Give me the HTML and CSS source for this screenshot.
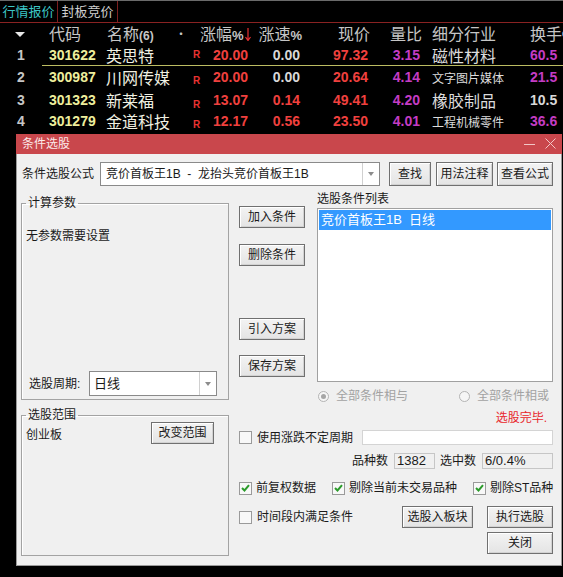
FILE: index.html
```html
<!DOCTYPE html>
<html lang="zh-CN">
<head>
<meta charset="utf-8">
<title>条件选股</title>
<link rel="stylesheet" href="styles.css">
</head>
<body>
<div class="screen">
  <div class="tabs">
    <div class="tab tab-a">行情报价</div>
    <div class="tab tab-b">封板竞价</div>
  </div>
  <div class="quote">
    <div class="qrow head">
      <div class="c idx"><span class="sort"></span></div>
      <div class="c hcode">代码</div>
      <div class="c hname">名称<b>(6)</b></div>
      <div class="c hdot">•</div>
      <div class="c hnum">涨幅<b>%</b><svg class="darr" width="6" height="13" viewBox="0 0 6 13"><path d="M3 0V12M0.5 9L3 12.5L5.5 9" fill="none" stroke="#e83030" stroke-width="1.2"/></svg></div>
      <div class="c hnum">涨速<b>%</b></div>
      <div class="c hnum">现价</div>
      <div class="c hnum">量比</div>
      <div class="c hind">细分行业</div>
      <div class="c hhs">换手<b>%</b></div>
    </div>
    <div class="qrow sel">
      <div class="c idx">1</div>
      <div class="c code">301622</div>
      <div class="c name">英思特</div>
      <div class="c rr">R</div>
      <div class="c num red">20.00</div>
      <div class="c num wht">0.00</div>
      <div class="c num red">97.32</div>
      <div class="c num pur">3.15</div>
      <div class="c ind">磁性材料</div>
      <div class="c hs pur">60.5</div>
    </div>
    <div class="qrow">
      <div class="c idx">2</div>
      <div class="c code">300987</div>
      <div class="c name">川网传媒</div>
      <div class="c rr">R</div>
      <div class="c num red">20.00</div>
      <div class="c num wht">0.00</div>
      <div class="c num red">20.64</div>
      <div class="c num pur">4.14</div>
      <div class="c ind small">文字图片媒体</div>
      <div class="c hs pur">21.5</div>
    </div>
    <div class="qrow">
      <div class="c idx">3</div>
      <div class="c code">301323</div>
      <div class="c name">新莱福</div>
      <div class="c rr">R</div>
      <div class="c num red">13.07</div>
      <div class="c num red">0.14</div>
      <div class="c num red">49.41</div>
      <div class="c num pur">4.20</div>
      <div class="c ind">橡胶制品</div>
      <div class="c hs wht">10.5</div>
    </div>
    <div class="qrow">
      <div class="c idx">4</div>
      <div class="c code">301279</div>
      <div class="c name">金道科技</div>
      <div class="c rr">R</div>
      <div class="c num red">12.17</div>
      <div class="c num red">0.56</div>
      <div class="c num red">23.50</div>
      <div class="c num pur">4.01</div>
      <div class="c ind small">工程机械零件</div>
      <div class="c hs pur">36.6</div>
    </div>
  </div>

  <div class="dialog">
    <div class="titlebar">
      <span class="ttl">条件选股</span>
      <span class="wctl">
        <svg width="11" height="11" viewBox="0 0 11 11"><path d="M0 6.5H11" stroke="#f2c6c6" stroke-width="1"/></svg>
        <svg width="11" height="11" viewBox="0 0 11 11"><path d="M0.5 0.5L10.5 10.5M10.5 0.5L0.5 10.5" stroke="#f2c6c6" stroke-width="1"/></svg>
      </span>
    </div>
    <div class="dbody">
      <div class="frow">
        <span class="flabel">条件选股公式</span>
        <div class="combo cwide"><span class="ctext">竞价首板王1B&nbsp;&nbsp;-&nbsp;&nbsp;龙抬头竞价首板王1B</span><span class="carrow"><i></i></span></div>
        <button class="btn b-find">查找</button>
        <button class="btn b-use">用法注释</button>
        <button class="btn b-view">查看公式</button>
      </div>
      <div class="main">
        <div class="lcol">
          <fieldset class="grp g1">
            <legend>计算参数</legend>
            <div class="g1in">
              <div class="note">无参数需要设置</div>
              <div class="period">
                <span class="plabel">选股周期:</span>
                <div class="combo csmall"><span class="ctext">日线</span><span class="carrow"><i></i></span></div>
              </div>
            </div>
          </fieldset>
          <fieldset class="grp g2">
            <legend>选股范围</legend>
            <div class="g2in">
              <span class="scope">创业板</span>
              <button class="btn b-scope">改变范围</button>
            </div>
          </fieldset>
        </div>
        <div class="rcol">
          <div class="rtop">
            <div class="bcol">
              <button class="btn b-col">加入条件</button>
              <button class="btn b-col b-del">删除条件</button>
              <button class="btn b-col b-imp">引入方案</button>
              <button class="btn b-col b-save">保存方案</button>
            </div>
            <div class="lstcol">
              <div class="lstlabel">选股条件列表</div>
              <div class="listbox"><div class="item">竞价首板王1B&nbsp;&nbsp;日线</div></div>
              <div class="radios">
                <span class="radio r1"><span class="rc on"></span>全部条件相与</span>
                <span class="radio r2"><span class="rc"></span>全部条件相或</span>
              </div>
            </div>
          </div>
          <div class="done">选股完毕.</div>
          <div class="crow1">
            <span class="cb"></span><span class="cbt">使用涨跌不定周期</span>
            <span class="tbox"></span>
          </div>
          <div class="stats">
            <span>品种数</span><span class="sbox s1">1382</span>
            <span class="lbl2">选中数</span><span class="sbox s2">6/0.4%</span>
          </div>
          <div class="crow2">
            <span class="ck"><span class="cb on"><svg width="9" height="8" viewBox="0 0 9 8"><path d="M1 4L3.5 6.5L8 1.2" fill="none" stroke="#2b9b2b" stroke-width="2"/></svg></span><span class="cbt">前复权数据</span></span>
            <span class="ck"><span class="cb on"><svg width="9" height="8" viewBox="0 0 9 8"><path d="M1 4L3.5 6.5L8 1.2" fill="none" stroke="#2b9b2b" stroke-width="2"/></svg></span><span class="cbt">剔除当前未交易品种</span></span>
            <span class="ck"><span class="cb on"><svg width="9" height="8" viewBox="0 0 9 8"><path d="M1 4L3.5 6.5L8 1.2" fill="none" stroke="#2b9b2b" stroke-width="2"/></svg></span><span class="cbt">剔除ST品种</span></span>
          </div>
          <div class="crow3">
            <span class="cb"></span><span class="cbt">时间段内满足条件</span>
            <button class="btn b-board">选股入板块</button>
            <button class="btn b-run">执行选股</button>
          </div>
          <div class="crow4">
            <button class="btn b-close">关闭</button>
          </div>
        </div>
      </div>
    </div>
  </div>
</div>
</body>
</html>
```

FILE: styles.css
```css
* { box-sizing: border-box; }
html, body { margin: 0; padding: 0; background: #000; }

.screen {
  width: 563px;
  height: 577px;
  position: relative;
  overflow: hidden;
  background: #000;
  font-family: "Noto Sans CJK SC", sans-serif;
}

/* ---------- tabs ---------- */
.tabs {
  display: flex;
  height: 23px;
  border-top: 1px solid #6a6a6a;
  border-bottom: 1px solid #8a2222;
}
.tab {
  font-size: 13px;
  line-height: 20px;
  text-align: center;
  color: #cfcfcf;
  border-right: 1px solid #7c1f1f;
}
.tab-a { width: 58px; color: #3cc6c6; }
.tab-b { width: 60px; }

/* ---------- quote table ---------- */
.qrow {
  display: grid;
  grid-template-columns: 42px 62px 71px 25px 50px 52px 68px 52px 106px 1fr;
  height: 22px;
  align-items: center;
  white-space: nowrap;
}
.qrow.head { height: 21px; color: #c6c6c6; font-size: 16px; line-height: 21px; }
.c { overflow: visible; }
.idx {
  padding-left: 17px;
  font: bold 14px "Liberation Sans", sans-serif;
  color: #c6c6c6;
}
.sort {
  display: inline-block;
  margin-left: -2px;
  border-left: 5px solid transparent;
  border-right: 5px solid transparent;
  border-top: 5px solid #e6e6e6;
  vertical-align: middle;
}
.hcode { padding-left: 7px; }
.hname { padding-left: 3px; }
.hname b, .hnum b, .hhs b { font: bold 13px "Liberation Sans", sans-serif; }
.hname b { font-size: 12px; }
.hdot { padding-left: 0; font-size: 12px; }
.hnum { text-align: right; }
.darr { vertical-align: -1px; margin-left: 1px; }
.hind { padding-left: 10px; }
.hhs { padding-left: 2px; }

.sel .c:not(:first-child) { border-bottom: 1px solid #bcbc62; height: 22px; line-height: 22px; }

.code {
  padding-left: 7px;
  font: bold 14px "Liberation Sans", sans-serif;
  color: #eeee9c;
}
.name { padding-left: 2px; font-size: 16px; color: #f0f0e2; line-height: 22px; }
.rr {
  padding-left: 18px;
  font: bold 10px "Liberation Sans", sans-serif;
  color: #e83232;
  align-self: end;
  padding-bottom: 2px;
}
.sel .rr { padding-bottom: 2px; line-height: 18px; }
.num {
  text-align: right;
  padding-right: 2px;
  font: bold 14px "Liberation Sans", sans-serif;
}
.red { color: #f0403e; }
.wht { color: #d8d8d8; }
.pur { color: #c43cc4; }
.ind { padding-left: 10px; font-size: 16px; color: #dcdcdc; }
.ind.small { font-size: 12px; }
.hs { padding-left: 2px; font: bold 14px "Liberation Sans", sans-serif; }

/* ---------- dialog ---------- */
.dialog {
  position: absolute;
  left: 16px;
  top: 134px;
  width: 546px;
  height: 432px;
  background: #f0f0f0;
  border: 1px solid #9a9a9a;
  border-top: 0;
  font-family: "Liberation Sans", "Noto Sans CJK SC", sans-serif;
  font-size: 12px;
  color: #1a1a1a;
}
.titlebar {
  height: 20px;
  margin: 0 -1px;
  background: #c9474c;
  display: flex;
  align-items: center;
  justify-content: space-between;
  padding: 0 6px 0 6px;
}
.ttl { color: #fbeaea; font-size: 12px; line-height: 20px; }
.wctl { display: flex; gap: 10px; padding-bottom: 1px; }

.dbody { padding-top: 8px; }

.btn {
  font-family: "Liberation Sans", "Noto Sans CJK SC", sans-serif;
  font-size: 12px;
  color: #1a1a1a;
  background: linear-gradient(#f3f3f3, #e4e4e4);
  border: 1px solid #707070;
  box-shadow: inset 1px 1px 0 #ffffff, inset -1px -1px 0 #d2d2d2;
  padding: 0;
  height: 22px;
  line-height: 18px;
  display: flex;
  align-items: center;
  justify-content: center;
}

.frow { display: flex; align-items: center; height: 24px; padding-left: 5px; }
.flabel { width: 78px; line-height: 14px; }
.combo {
  display: flex;
  height: 24px;
  background: #fff;
  border: 1px solid #8a8a8a;
}
.cwide { width: 280px; }
.ctext { flex: 1; padding-left: 5px; line-height: 22px; white-space: nowrap; overflow: hidden; }
.cwide .ctext { font-size: 12px; }
.carrow {
  width: 17px;
  border-left: 1px solid #d0d0d0;
  display: flex;
  align-items: center;
  justify-content: center;
}
.carrow i {
  display: block;
  border-left: 3.5px solid transparent;
  border-right: 3.5px solid transparent;
  border-top: 4px solid #8c8c8c;
}
.frow .btn { height: 24px; }
.b-find { margin-left: 9px; width: 42px; }
.b-use { margin-left: 5px; width: 57px; }
.b-view { margin-left: 4px; width: 56px; }

.main { display: flex; margin-top: 6px; padding-left: 4px; }
.lcol { width: 208px; }

.grp {
  margin: 0;
  min-width: 0;
  width: 208px;
  border: 1px solid #a3a3a3;
  box-shadow: inset 1px 1px 0 #fff;
  padding: 0 4px 3px 4px;
}
.grp legend {
  font-size: 12px;
  line-height: 14px;
  padding: 0 2px;
  margin-left: 0px;
}
.g1 { margin-top: 4px; }
.g1in {
  height: 186px;
  display: flex;
  flex-direction: column;
  justify-content: space-between;
}
.note { margin-top: 19px; line-height: 14px; }
.period { display: flex; align-items: center; padding-left: 3px; }
.plabel { width: 60px; line-height: 14px; }
.csmall { width: 128px; height: 25px; }
.csmall .ctext { font-size: 13px; line-height: 23px; padding-left: 4px; }

.g2 { margin-top: 8px; }
.g2in {
  height: 130px;
  display: flex;
  justify-content: space-between;
  align-items: flex-start;
  padding-right: 10px;
}
.scope { margin-top: 6px; line-height: 14px; }
.b-scope { width: 63px; }

.rcol { width: 314px; margin-left: 10px; }
.rtop { display: flex; }
.bcol { width: 66px; padding-top: 14px; display: flex; flex-direction: column; }
.b-col { width: 66px; }
.b-del { margin-top: 16px; }
.b-imp { margin-top: 52px; }
.b-save { margin-top: 15px; }

.lstcol { width: 236px; margin-left: 12px; }
.lstlabel { line-height: 14px; }
.listbox {
  margin-top: 2px;
  height: 174px;
  background: #fff;
  border: 1px solid #a0a0a0;
  padding: 1px;
}
.item {
  background: #3399ff;
  color: #fff;
  font-size: 13px;
  line-height: 20px;
  height: 20px;
  padding-left: 2px;
  white-space: nowrap;
}
.radios { display: flex; margin-top: 7px; height: 14px; line-height: 14px; color: #a2a2a2; padding-left: 1px; }
.radio { display: flex; align-items: center; }
.r1 { width: 141px; }
.rc {
  width: 11px;
  height: 11px;
  border-radius: 50%;
  border: 1px solid #b4b4b4;
  background: #f6f6f6;
  margin-right: 7px;
  display: flex;
  align-items: center;
  justify-content: center;
}
.rc.on::after {
  content: "";
  width: 5px;
  height: 5px;
  border-radius: 50%;
  background: #a6a6a6;
}

.done { margin-top: 8px; line-height: 14px; text-align: right; padding-right: 6px; color: #e8262b; }

.cb {
  width: 13px;
  height: 13px;
  border: 1px solid #9a9a9a;
  background: #f8f8f8;
  flex: none;
  display: flex;
  align-items: center;
  justify-content: center;
}
.cbt { margin-left: 5px; line-height: 14px; white-space: nowrap; }

.crow1 { display: flex; align-items: center; margin-top: 5px; height: 15px; }
.tbox {
  margin-left: auto;
  width: 191px;
  height: 15px;
  background: #fff;
  border: 1px solid #d4d4d4;
}

.stats {
  display: flex;
  justify-content: flex-end;
  align-items: center;
  margin-top: 8px;
  height: 16px;
  line-height: 14px;
}
.sbox {
  margin-left: 6px;
  height: 16px;
  border: 1px solid #c6c6c6;
  background: #f0f0f0;
  padding-left: 2px;
  line-height: 14px;
  font-size: 13px;
}
.s1 { width: 41px; }
.lbl2 { margin-left: 5px; }
.s2 { width: 71px; }

.crow2 {
  display: grid;
  grid-template-columns: 93px 141px 1fr;
  margin-top: 12px;
  height: 14px;
}
.ck { display: flex; align-items: center; }
.ck .cbt { margin-left: 4px; }

.crow3 { display: flex; align-items: center; margin-top: 11px; height: 22px; }
.b-board { margin-left: auto; width: 71px; }
.b-run { margin-left: 14px; width: 66px; }
.crow4 { display: flex; justify-content: flex-end; margin-top: 4px; }
.b-close { width: 66px; }
```
